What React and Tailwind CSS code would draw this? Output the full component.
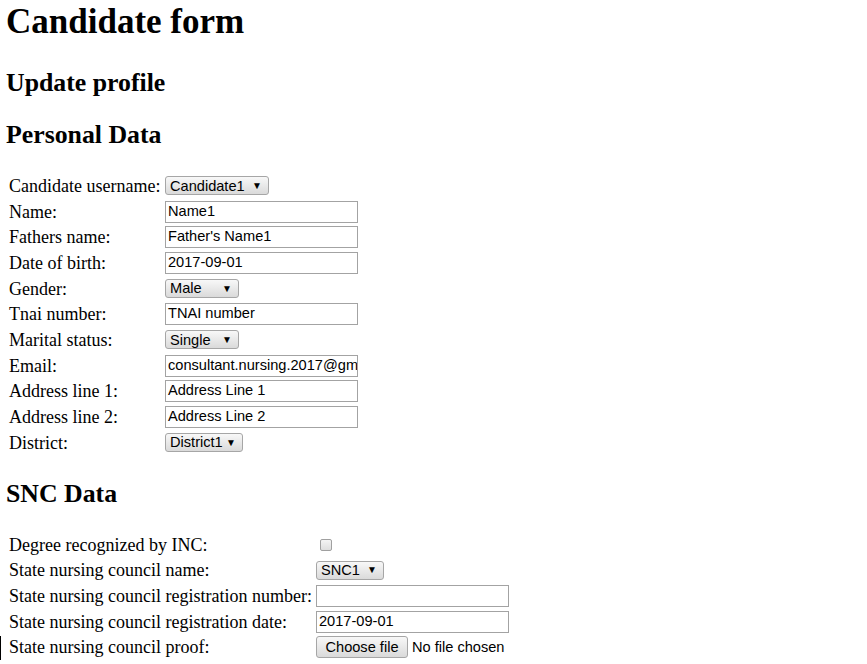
import React from 'react'

const serif = { fontFamily: '"Liberation Serif", "Times New Roman", serif' }

// Native-looking select box
const Select = ({ value, width }) => (
    <div
        className={`h-[19px] ${width} flex items-center justify-between pl-[4px] pr-[6px] border border-[#a6a6a6] rounded-[3px] bg-gradient-to-b from-[#f8f8f8] to-[#dadada] text-[14.6px] text-black font-['Liberation_Sans',Arial,sans-serif]`}
    >
        <span className="leading-none">{value}</span>
        <span className="text-[10px] leading-none">▼</span>
    </div>
)

const TextInput = ({ value, width = 'w-[193px]' }) => (
    <div className={`h-[22px] ${width} border border-[#a3a3a3] bg-white pl-[2px] flex items-center overflow-hidden whitespace-nowrap text-[14.6px] text-black font-['Liberation_Sans',Arial,sans-serif]`}>
        {value}
    </div>
)

const Row = ({ label, labelWidth, children }) => (
    <div className="h-[25.7px] flex items-center">
        <div className={`${labelWidth} pl-[3px] text-[18px] leading-none whitespace-nowrap`}>{label}</div>
        <div className="flex items-center">{children}</div>
    </div>
)

export default function App() {
    const personal = [
        ['Candidate username:', <Select value="Candidate1" width="w-[104px]" />],
        ['Name:', <TextInput value="Name1" />],
        ['Fathers name:', <TextInput value="Father's Name1" />],
        ['Date of birth:', <TextInput value="2017-09-01" />],
        ['Gender:', <Select value="Male" width="w-[74px]" />],
        ['Tnai number:', <TextInput value="TNAI number" />],
        ['Marital status:', <Select value="Single" width="w-[74px]" />],
        ['Email:', <TextInput value="consultant.nursing.2017@gmail.com" />],
        ['Address line 1:', <TextInput value="Address Line 1" />],
        ['Address line 2:', <TextInput value="Address Line 2" />],
        ['District:', <Select value="District1" width="w-[78px]" />],
    ]

    return (
        <div className="relative min-h-[664px] bg-white text-black px-[6px] pt-[2px]" style={serif}>
            <h1 className="h-[40px] leading-[40px] text-[35px] font-bold">Candidate form</h1>
            <h2 className="mt-[26px] h-[30px] leading-[30px] text-[25.8px] font-bold">Update profile</h2>
            <h2 className="mt-[22px] h-[30px] leading-[30px] text-[25.8px] font-bold">Personal Data</h2>

            {/* Personal data table */}
            <div className="mt-[23px]">
                {personal.map(([label, field]) => (
                    <Row key={label} label={label} labelWidth="w-[159px]">{field}</Row>
                ))}
            </div>

            <h2 className="mt-[23.3px] h-[30px] leading-[30px] text-[25.8px] font-bold">SNC Data</h2>

            {/* SNC table */}
            <div className="mt-[23px]">
                <Row label="Degree recognized by INC:" labelWidth="w-[310px]">
                    <div className="ml-[4px] w-[12px] h-[12px] rounded-[2px] border border-[#a0a0a0] bg-gradient-to-b from-[#f4f4f4] to-[#dedede]" />
                </Row>
                <Row label="State nursing council name:" labelWidth="w-[310px]">
                    <Select value="SNC1" width="w-[68px]" />
                </Row>
                <Row label="State nursing council registration number:" labelWidth="w-[310px]">
                    <TextInput value="" />
                </Row>
                <Row label="State nursing council registration date:" labelWidth="w-[310px]">
                    <TextInput value="2017-09-01" />
                </Row>
                <Row label="State nursing council proof:" labelWidth="w-[310px]">
                    <div className="flex items-center font-['Liberation_Sans',Arial,sans-serif] text-[14.6px]">
                        <div className="h-[22px] w-[92px] flex items-center justify-center border border-[#a6a6a6] rounded-[3px] bg-gradient-to-b from-[#f8f8f8] to-[#dadada]">
                            Choose file
                        </div>
                        <span className="ml-[4px]">No file chosen</span>
                    </div>
                </Row>
            </div>

            <div className="absolute left-0 top-[636px] w-[1px] h-[24px] bg-black" />
        </div>
    )
}
